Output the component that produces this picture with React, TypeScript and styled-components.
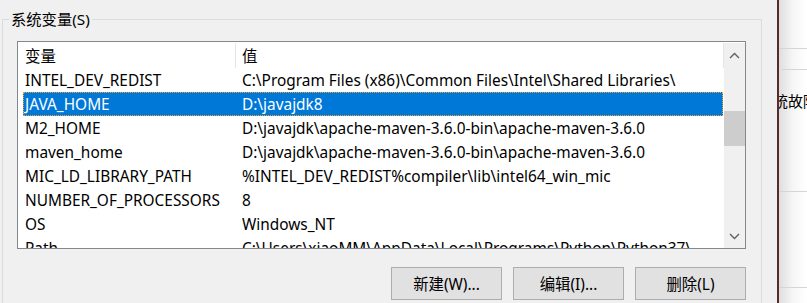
import React from 'react';
import styled, { createGlobalStyle } from 'styled-components';

const GlobalStyle = createGlobalStyle`
  html, body {
    margin: 0;
    padding: 0;
    background: #f0f0f0;
    overflow: hidden;
  }
  body {
    font-family: "Noto Sans", "Noto Sans CJK SC", sans-serif;
    font-size: 15px;
    color: #000;
  }
`;

const Page = styled.div`
  display: flex;
  width: 807px;
  height: 303px;
  overflow: hidden;
`;

const LeftPane = styled.div`
  width: 777px;
  flex-shrink: 0;
  padding-left: 2px;
  box-sizing: border-box;
`;

const GroupBox = styled.fieldset`
  margin: 9px 0 0 0;
  padding: 0;
  width: 760px;
  height: 320px;
  box-sizing: border-box;
  border: 1px solid #dcdcdc;
  min-width: 0;
`;

const GroupTitle = styled.legend`
  margin-left: 6px;
  padding: 0 2px;
  line-height: 20px;
  font-size: 15.3px;
`;

const ListBox = styled.div`
  margin: 12px 0 0 14px;
  width: 729px;
  height: 208px;
  box-sizing: border-box;
  border: 1px solid #828790;
  background: #fff;
  display: flex;
  overflow: hidden;
  font-size: 15.4px;
`;

const ListContent = styled.div`
  flex: 1;
  overflow: hidden;
`;

const HeaderRow = styled.div`
  display: flex;
  height: 26px;
  margin-left: 5px;
  align-items: stretch;
`;

const HeaderCell = styled.div<{ $width?: number }>`
  display: flex;
  align-items: center;
  ${({ $width }) => ($width ? `width: ${$width}px;` : 'flex: 1;')}
  padding-left: ${({ $width }) => ($width ? 2 : 6)}px;
  box-sizing: border-box;
  border-right: 1px solid #e5e5e5;
  margin: 1px 0 0 0;
`;

const Row = styled.div<{ $selected?: boolean }>`
  display: flex;
  align-items: center;
  height: 24px;
  margin: 0 1px 0 5px;
  white-space: nowrap;
  box-sizing: border-box;
  background: ${({ $selected }) => ($selected ? '#0078d7' : 'transparent')};
  color: ${({ $selected }) => ($selected ? '#fff' : '#000')};
  outline: ${({ $selected }) => ($selected ? '1px dotted #f5a623' : 'none')};
  outline-offset: -1px;
  border-top: 1px solid transparent;
`;

const NameCell = styled.div`
  width: 219px;
  flex-shrink: 0;
  padding-left: 2px;
  box-sizing: border-box;
  overflow: hidden;
`;

const ValueCell = styled.div`
  flex: 1;
  overflow: hidden;
`;

const ScrollBar = styled.div`
  width: 21px;
  flex-shrink: 0;
  background: #f0f0f0;
  display: flex;
  flex-direction: column;
  margin-top: 1px;
`;

const ArrowButton = styled.div`
  height: 24px;
  display: flex;
  align-items: center;
  justify-content: center;
`;

const Track = styled.div`
  flex: 1;
`;

const Thumb = styled.div`
  margin-top: 44px;
  height: 35px;
  background: #cdcdcd;
`;

const ButtonRow = styled.div`
  display: flex;
  justify-content: flex-end;
  gap: 11px;
  width: 729px;
  margin: 18px 0 0 14px;
`;

const Button = styled.button`
  width: 111px;
  height: 33px;
  box-sizing: border-box;
  background: #e1e1e1;
  border: 1px solid #adadad;
  font-family: "Noto Sans", "Noto Sans CJK SC", sans-serif;
  font-size: 15.4px;
  color: #000;
  padding: 0;
`;

const RightWindow = styled.div`
  flex: 1;
  border-left: 2px solid #5a2a2a;
  background: linear-gradient(90deg, #dedede 0%, #f6f6f6 50%, #fff 100%);
  display: flex;
  flex-direction: column;
  overflow: hidden;
`;

const Rule = styled.div<{ $top: number; $inset?: number }>`
  margin-top: ${({ $top }) => $top}px;
  margin-left: ${({ $inset }) => $inset ?? 0}px;
  height: 1px;
  background: #d6d6d6;
`;

const SideText = styled.div`
  margin: 21px 0 0 -6px;
  white-space: nowrap;
  line-height: 20px;
  font-family: "Noto Sans CJK SC", sans-serif;
`;

const Chevron: React.FC<{ down?: boolean }> = ({ down }) => (
  <svg width="11" height="7" viewBox="0 0 11 7">
    <polyline
      points={down ? '1,1 5.5,5.5 10,1' : '1,6 5.5,1.5 10,6'}
      fill="none"
      stroke="#606060"
      strokeWidth="1.4"
    />
  </svg>
);

const vars = [
  ['INTEL_DEV_REDIST', 'C:\\Program Files (x86)\\Common Files\\Intel\\Shared Libraries\\'],
  ['JAVA_HOME', 'D:\\javajdk8'],
  ['M2_HOME', 'D:\\javajdk\\apache-maven-3.6.0-bin\\apache-maven-3.6.0'],
  ['maven_home', 'D:\\javajdk\\apache-maven-3.6.0-bin\\apache-maven-3.6.0'],
  ['MIC_LD_LIBRARY_PATH', '%INTEL_DEV_REDIST%compiler\\lib\\intel64_win_mic'],
  ['NUMBER_OF_PROCESSORS', '8'],
  ['OS', 'Windows_NT'],
  ['Path', 'C:\\Users\\xiaoMM\\AppData\\Local\\Programs\\Python\\Python37\\'],
];

export default function App() {
  return (
    <>
      <GlobalStyle />
      <Page>
        <LeftPane>
          <GroupBox>
            <GroupTitle>系统变量(S)</GroupTitle>
            <ListBox>
              <ListContent>
                <HeaderRow>
                  <HeaderCell $width={213}>变量</HeaderCell>
                  <HeaderCell>值</HeaderCell>
                </HeaderRow>
                {vars.map(([name, value]) => (
                  <Row key={name} $selected={name === 'JAVA_HOME'}>
                    <NameCell>{name}</NameCell>
                    <ValueCell>{value}</ValueCell>
                  </Row>
                ))}
              </ListContent>
              <ScrollBar>
                <ArrowButton>
                  <Chevron />
                </ArrowButton>
                <Track>
                  <Thumb />
                </Track>
                <ArrowButton>
                  <Chevron down />
                </ArrowButton>
              </ScrollBar>
            </ListBox>
            <ButtonRow>
              <Button>新建(W)...</Button>
              <Button>编辑(I)...</Button>
              <Button>删除(L)</Button>
            </ButtonRow>
          </GroupBox>
        </LeftPane>
        <RightWindow>
          <Rule $top={48} />
          <Rule $top={20} $inset={3} />
          <SideText>统故障</SideText>
          <Rule $top={80} />
          <Rule $top={95} />
        </RightWindow>
      </Page>
    </>
  );
}
